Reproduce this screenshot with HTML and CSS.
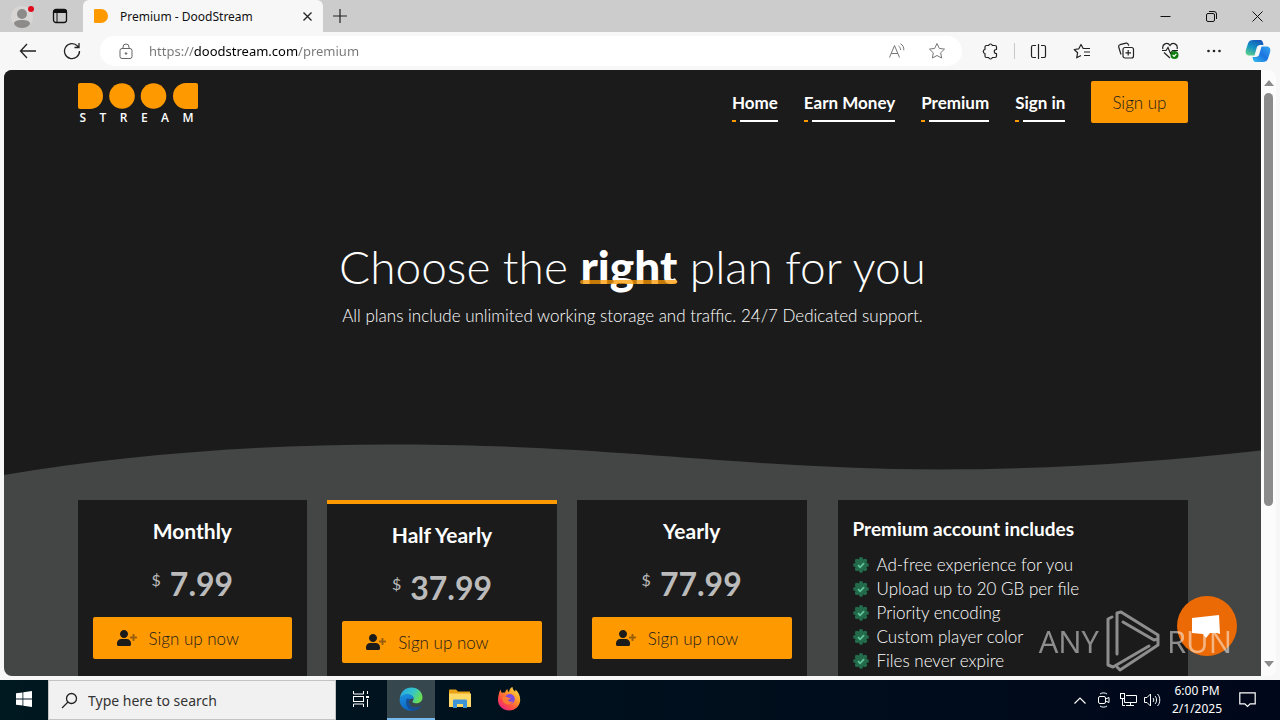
FILE: index.html
```html
<!DOCTYPE html>
<html lang="en">
<head>
  <meta charset="UTF-8" />
  <meta name="viewport" content="width=device-width, initial-scale=1.0" />
  <title>Premium - DoodStream</title>
  <link rel="stylesheet" href="styles.css">
</head>
<body>
  <!-- shared icons -->
  <svg class="sprite" aria-hidden="true">
    <symbol id="user-plus" viewBox="0 0 640 512">
      <path d="M224 256c70.7 0 128-57.3 128-128S294.7 0 224 0 96 57.3 96 128s57.3 128 128 128zm89.6 32h-179.2C60.2 288 0 348.2 0 422.4V464c0 26.5 21.5 48 48 48h352c26.5 0 48-21.5 48-48v-41.6c0-74.2-60.2-134.4-134.4-134.4z" />
      <path opacity=".45" d="M624 208h-64v-64c0-8.8-7.2-16-16-16h-32c-8.8 0-16 7.2-16 16v64h-64c-8.8 0-16 7.2-16 16v32c0 8.8 7.2 16 16 16h64v64c0 8.8 7.2 16 16 16h32c8.8 0 16-7.2 16-16v-64h64c8.8 0 16-7.2 16-16v-32c0-8.8-7.2-16-16-16z" />
    </symbol>
    <symbol id="badge" viewBox="0 0 16 16">
      <g fill="#236b4b">
        <circle cx="8" cy="8" r="6" />
        <circle cx="8" cy="2.2" r="2.1" /><circle cx="12.1" cy="3.9" r="2.1" />
        <circle cx="13.8" cy="8" r="2.1" /><circle cx="12.1" cy="12.1" r="2.1" />
        <circle cx="8" cy="13.8" r="2.1" /><circle cx="3.9" cy="12.1" r="2.1" />
        <circle cx="2.2" cy="8" r="2.1" /><circle cx="3.9" cy="3.9" r="2.1" />
      </g>
      <path d="M5 8.2l2.1 2.1 4-4.2" fill="none" stroke="#62c497" stroke-width="1.7" />
    </symbol>
  </svg>

  <div class="tabbar">
    <button class="icon-btn profile" aria-label="Profile">
      <svg width="26" height="28" viewBox="0 0 26 28">
        <circle cx="12" cy="15" r="11" fill="#d8d6d4" />
        <circle cx="12" cy="12" r="5" fill="#8d8b89" />
        <path d="M4 22c0-3 3-4 8-4s8 1 8 4c-2 3-5 4-8 4s-6-1-8-4z" fill="#8d8b89" />
        <circle cx="21" cy="7" r="3" fill="#e00b1c" />
      </svg>
    </button>
    <button class="icon-btn workspaces" aria-label="Tab actions">
      <svg width="16" height="16" viewBox="0 0 16 16" fill="none" stroke="#111">
        <rect x="1.5" y="1.5" width="13" height="13" rx="2.5" stroke-width="1.3" />
        <path d="M1.5 3.5h13" stroke-width="3" /><path d="M5 4v10" />
      </svg>
    </button>
    <div class="tab">
      <svg width="14" height="14" viewBox="0 0 14 14"><path d="M0 1a1 1 0 0 1 1-1h6a7 7 0 0 1 0 14H1a1 1 0 0 1-1-1z" fill="#ff9900" /></svg>
      <span class="tab-title">Premium - DoodStream</span>
      <button class="icon-btn close" aria-label="Close tab">
        <svg width="9" height="9" viewBox="0 0 9 9" stroke="#222" stroke-width="1.3"><path d="M.5.5l8 8M8.5.5l-8 8" /></svg>
      </button>
    </div>
    <button class="icon-btn new-tab" aria-label="New tab">
      <svg width="14" height="14" viewBox="0 0 14 14" stroke="#222" stroke-width="1.2"><path d="M7 0v14M0 7h14" /></svg>
    </button>
    <div class="window-controls">
      <button class="icon-btn" aria-label="Minimize"><svg width="11" height="11" viewBox="0 0 11 11" stroke="#111"><path d="M.5 5.5h10" /></svg></button>
      <button class="icon-btn" aria-label="Restore"><svg width="11" height="11" viewBox="0 0 11 11" fill="none" stroke="#111"><rect x=".5" y="2.5" width="8" height="8" rx="1.5" /><path d="M3 .5h5a2.5 2.5 0 0 1 2.5 2.5v5" /></svg></button>
      <button class="icon-btn" aria-label="Close"><svg width="11" height="11" viewBox="0 0 11 11" stroke="#111"><path d="M.5.5l10 10M10.5.5l-10 10" /></svg></button>
    </div>
  </div>

  <div class="toolbar">
    <button class="icon-btn nav-btn" aria-label="Back">
      <svg width="18" height="16" viewBox="0 0 18 16" fill="none" stroke="#222" stroke-width="1.3"><path d="M8 1L1.5 8 8 15M1.5 8H17" /></svg>
    </button>
    <button class="icon-btn nav-btn" aria-label="Refresh">
      <svg width="18" height="18" viewBox="0 0 18 18" fill="none" stroke="#222" stroke-width="1.3"><path d="M16.5 9A7.5 7.5 0 1 1 14.5 4L16 5.5M16 1v4.5h-4.5" /></svg>
    </button>
    <div class="address">
      <svg width="14" height="17" viewBox="0 0 14 17" fill="none" stroke="#666"><rect x="1" y="5.5" width="12" height="10" rx="2" /><path d="M4 5.5V4a3 3 0 0 1 6 0v1.5" /><circle cx="7" cy="10.5" r=".8" fill="#666" /></svg>
      <input class="url" type="text" aria-label="Address" value="https://doodstream.com/premium">
      <button class="icon-btn" aria-label="Read aloud">
        <svg width="18" height="16" viewBox="0 0 18 16" fill="none" stroke="#777"><path d="M1.5 14.5L6.5 2.5l5 12M3.2 10.5h6.6M10.5 3c1.4.8 2 2 2 4M12.5.8c2.5 1.4 3.5 3.4 3.3 6.5" /></svg>
      </button>
      <button class="icon-btn" aria-label="Add to favorites">
        <svg width="18" height="18" viewBox="0 0 18 18" fill="none" stroke="#777" stroke-linejoin="round"><path d="M9 1.5l2.3 4.9 5.2.7-3.8 3.7.9 5.2L9 13.5 4.4 16l.9-5.2L1.5 7.1l5.2-.7z" /></svg>
      </button>
    </div>
    <div class="tools">
      <button class="icon-btn" aria-label="Extensions">
        <svg width="17" height="17" viewBox="0 0 17 17" fill="none" stroke="#222" stroke-width="1.2" stroke-linejoin="round"><path d="M4.5 2.5h2.2c.3-2 3.3-2 3.6 0H13a1.5 1.5 0 0 1 1.5 1.5v2.5c-3-.3-3 4.3 0 4V13a1.5 1.5 0 0 1-1.5 1.5h-2.7c-.3 2-3.3 2-3.6 0H4.5A1.5 1.5 0 0 1 3 13v-2.5c-2.3-.3-2.3-3.7 0-4V4a1.5 1.5 0 0 1 1.5-1.5z" /></svg>
      </button>
      <span class="divider"></span>
      <button class="icon-btn" aria-label="Split screen">
        <svg width="17" height="17" viewBox="0 0 17 17" fill="none" stroke="#222" stroke-width="1.2"><path d="M6 2.5H3A1.5 1.5 0 0 0 1.5 4v9A1.5 1.5 0 0 0 3 14.5h3M11 2.5h3A1.5 1.5 0 0 1 15.5 4v9a1.5 1.5 0 0 1-1.5 1.5h-3M8.5 1v15" /></svg>
      </button>
      <button class="icon-btn" aria-label="Favorites">
        <svg width="18" height="17" viewBox="0 0 18 17" fill="none" stroke="#222" stroke-width="1.2" stroke-linejoin="round"><path d="M11 5.5h-.8L8 1.5 5.800 5.800l-4.600.7 3.400 3.300-.9 5L8 12.500M11 5.500h6M11 9h6M11 12.500h6" /></svg>
      </button>
      <button class="icon-btn" aria-label="Collections">
        <svg width="18" height="18" viewBox="0 0 18 18" fill="none" stroke="#222" stroke-width="1.2"><rect x="6" y="5.5" width="10.5" height="10.5" rx="2" /><path d="M11.2 8v5.5M8.5 10.8H14M4 12.5L1.7 5A2 2 0 0 1 3 2.7l6-1.5a2 2 0 0 1 2.3 1.3l.5 1.3" /></svg>
      </button>
      <button class="icon-btn" aria-label="Browser essentials">
        <svg width="18" height="18" viewBox="0 0 18 18" fill="none" stroke="#222" stroke-width="1.2"><path d="M2 7c-1.5-5 4.5-7.5 7-3.5C11.5-.5 17.5 2 16 7M3 10.5l6 5.5M1 8.5h4l2-3 2.5 6 2-3H17" /><circle cx="13.5" cy="13" r="4" fill="#107c10" stroke="none" /><path d="M11.7 13l1.4 1.4 2.3-2.5" stroke="#fff" /></svg>
      </button>
      <button class="icon-btn" aria-label="Settings and more">
        <svg width="16" height="4" viewBox="0 0 16 4" fill="#222"><circle cx="2.5" cy="2" r="1.3" /><circle cx="8" cy="2" r="1.3" /><circle cx="13.5" cy="2" r="1.3" /></svg>
      </button>
      <button class="icon-btn" aria-label="Copilot">
        <svg width="26" height="24" viewBox="0 0 26 24">
          <defs>
            <linearGradient id="cop1" x1=".7" y1="0" x2=".2" y2="1"><stop offset="0" stop-color="#1557b8" /><stop offset=".5" stop-color="#1592c4" /><stop offset="1" stop-color="#5ccf8a" /></linearGradient>
            <linearGradient id="cop2" x1="1" y1="0" x2="0" y2="1"><stop offset="0" stop-color="#36a8f0" /><stop offset=".5" stop-color="#1c74e0" /><stop offset="1" stop-color="#35c0ee" /></linearGradient>
          </defs>
          <path d="M8.5 1H15c2.5 0 3 2 3.5 5h-3c-2.5 0-3.500 1.500-4 3.500l-2 7H4.500c-3.500 0-4.500-2.500-3.500-6l2-6C3.700 2 5.500 1 8.500 1z" fill="url(#cop1)" />
          <path d="M17.500 23H11c-2.500 0-3-2-3.500-5h3c2.500 0 3.500-1.500 4-3.500l2-7h5c3.500 0 4.500 2.500 3.500 6l-2 6c-.7 2.500-2.500 3.500-5.500 3.500z" fill="url(#cop2)" />
        </svg>
      </button>
    </div>
  </div>

  <div class="viewport">
    <div class="site">
      <div class="hero">
        <header class="container header">
          <a class="logo" href="#" aria-label="DoodStream">
            <svg width="120" height="26" viewBox="0 0 120 26" fill="#ff9900">
              <path d="M0 2a2 2 0 0 1 2-2h10a13 13 0 0 1 0 26H2a2 2 0 0 1-2-2z" />
              <circle cx="44" cy="13" r="12.8" /><circle cx="75.5" cy="13" r="12.8" />
              <path d="M120 2a2 2 0 0 0-2-2h-10a13 13 0 0 0 0 26h10a2 2 0 0 0 2-2z" />
            </svg>
            <span class="logo-text"><span>S</span><span>T</span><span>R</span><span>E</span><span>A</span><span>M</span></span>
          </a>
          <nav class="menu">
            <a class="menu-link" href="#">Home</a>
            <a class="menu-link" href="#">Earn Money</a>
            <a class="menu-link" href="#">Premium</a>
            <a class="menu-link" href="#">Sign in</a>
            <a class="btn" href="#">Sign up</a>
          </nav>
        </header>
        <div class="container intro">
          <h1>Choose the <b>right</b> plan for you</h1>
          <p>All plans include unlimited working storage and traffic. 24/7 Dedicated support.</p>
        </div>
        <svg class="wave" viewBox="0 0 1257 40" preserveAspectRatio="none">
          <path d="M0 35C130 13 270 4 396 4.500C610 5 740 29 936 29.500C1050 29.500 1150 22 1257 10.500V40H0z" fill="#444645" />
        </svg>
      </div>

      <main class="container plans">
        <div class="plan-list">
          <section class="plan">
            <h2>Monthly</h2>
            <div class="price"><sup>$</sup> 7.99</div>
            <a class="btn btn-plan" href="#"><svg width="20" height="16"><use href="#user-plus" /></svg>Sign up now</a>
          </section>
          <section class="plan plan-popular">
            <h2>Half Yearly</h2>
            <div class="price"><sup>$</sup> 37.99</div>
            <a class="btn btn-plan" href="#"><svg width="20" height="16"><use href="#user-plus" /></svg>Sign up now</a>
          </section>
          <section class="plan">
            <h2>Yearly</h2>
            <div class="price"><sup>$</sup> 77.99</div>
            <a class="btn btn-plan" href="#"><svg width="20" height="16"><use href="#user-plus" /></svg>Sign up now</a>
          </section>
        </div>
        <aside class="features">
          <h3>Premium account includes</h3>
          <ul>
            <li><svg width="16" height="16"><use href="#badge" /></svg>Ad-free experience for you</li>
            <li><svg width="16" height="16"><use href="#badge" /></svg>Upload up to 20 GB per file</li>
            <li><svg width="16" height="16"><use href="#badge" /></svg>Priority encoding</li>
            <li><svg width="16" height="16"><use href="#badge" /></svg>Custom player color</li>
            <li><svg width="16" height="16"><use href="#badge" /></svg>Files never expire</li>
          </ul>
        </aside>
      </main>

      <button class="chat" aria-label="Open chat">
        <svg width="60" height="60" viewBox="0 0 60 60">
          <circle cx="30" cy="30" r="30" fill="#ec6a05" />
          <path d="M15 22l27-3 1 19-3-1-7 0-4 5-3-4-11-1z" fill="#fff" />
        </svg>
      </button>
    </div>
    <div class="scrollbar">
      <svg width="10" height="6" viewBox="0 0 10 6"><path d="M0 6l5-6 5 6z" fill="#8b8b8b" /></svg>
      <div class="track"><div class="thumb"></div></div>
      <svg width="10" height="6" viewBox="0 0 10 6"><path d="M0 0l5 6 5-6z" fill="#8b8b8b" /></svg>
    </div>
  </div>

  <div class="watermark">
    <span>ANY</span>
    <svg width="56" height="62" viewBox="0 0 56 62" fill="none" stroke="#fff" stroke-width="3" stroke-linejoin="round" stroke-linecap="round">
      <path d="M7 7L3 9v46l5 2 36-21" />
      <path d="M12 44V3l4-1 37 23v4l-4 1-31-18" />
      <path d="M12 57l3 3 38-25v-5" />
    </svg>
    <span>RUN</span>
  </div>

  <div class="taskbar">
    <button class="task start" aria-label="Start">
      <svg width="16" height="16" viewBox="0 0 16 16" fill="#fff"><path d="M0 2.3L6.5 1.4v6.2H0zM7.3 1.3L16 0v7.6H7.3zM0 8.4h6.5v6.2L0 13.7zM7.3 8.4H16V16l-8.7-1.3z" /></svg>
    </button>
    <label class="search">
      <svg width="17" height="17" viewBox="0 0 17 17" fill="none" stroke="#222" stroke-width="1.3"><circle cx="10.5" cy="6.5" r="5" /><path d="M7 10L1 16" /></svg>
      <input type="text" placeholder="Type here to search" aria-label="Type here to search">
    </label>
    <button class="task" aria-label="Task view">
      <svg width="16" height="16" viewBox="0 0 16 16" fill="none" stroke="#fff"><path d="M.5 0v3h10V0M.5 16v-3h10v3M14.5 0v3M14.5 8v8" /><rect x=".5" y="5.5" width="10" height="5" /><path d="M13 6h3" stroke-width="2" /></svg>
    </button>
    <button class="task active" aria-label="Microsoft Edge">
      <svg width="24" height="24" viewBox="0 0 24 24">
        <defs>
          <linearGradient id="edge1" x1="0" y1="0" x2="1" y2=".4"><stop offset="0" stop-color="#26a3e4" /><stop offset=".6" stop-color="#35c6c9" /><stop offset="1" stop-color="#66dd57" /></linearGradient>
          <linearGradient id="edge2" x1="0" y1="0" x2=".4" y2="1"><stop offset="0" stop-color="#1b92e0" /><stop offset="1" stop-color="#0b64c0" /></linearGradient>
        </defs>
        <path d="M.8 11C2 4.5 6.5.5 12.2.5c7 0 11.3 5 11.3 9.8 0 4-3 6-6.2 6-3.5 0-4.3-1.3-3.5-2.3 2.2-3-.3-6.2-4.3-6.2C5.5 7.8 2 9.5.8 11z" fill="url(#edge1)" />
        <path d="M.6 12.5C.8 9.5 4.5 6.7 8.5 7c4 .2 6.3 2.5 6 5-1.5-1-4 0-4.5 2.5-.5 3.5 2.5 7.5 8.5 6 1.5-.4 2.5-1 3.5-1.5-2.3 3.3-6 4.8-9.7 4.8C5.5 23.8.3 18.5.6 12.5z" fill="url(#edge2)" />
        <path d="M8 11.5c-2.5 4.5 0 10.5 5.5 12.2 4-.1 7-2.2 8.5-4.7-1 .5-2 1.1-3.5 1.5-6 1.5-9-2.5-8.5-6 .2-1.5 1-2.2 1.5-2.6z" fill="#174f96" />
      </svg>
    </button>
    <button class="task" aria-label="File Explorer">
      <svg width="22" height="20" viewBox="0 0 22 20"><path d="M0 1.5A1 1 0 0 1 1 .5h6l2 2h12v6H0z" fill="#e8a317" /><path d="M0 4.5h22V18H0z" fill="#ffd966" /><path d="M4 19v-7.5a1 1 0 0 1 1-1h12a1 1 0 0 1 1 1V19h-4v-4H8v4z" fill="#3d95d8" /></svg>
    </button>
    <button class="task" aria-label="Firefox">
      <svg width="24" height="24" viewBox="0 0 24 24">
        <defs><linearGradient id="fox" x1="1" y1="0" x2=".2" y2="1"><stop offset="0" stop-color="#fff04f" /><stop offset=".4" stop-color="#ff9a2a" /><stop offset=".75" stop-color="#ff4a45" /><stop offset="1" stop-color="#e3208f" /></linearGradient></defs>
        <path d="M1 13C1 9 2 5.5 3.5 2.5c.3 1.5.8 2.7 1.5 3.5 1-.5 2-.5 3-.3C8.3 4.2 9 3 10.5 2c-.2 1.5.5 2.2 1.5 3 .5-2.5 1-4 3.5-5 0 2.5 1.5 3.5 2.5 4.5.5-.5.5-1.2.4-2C21.5 5 23.3 9 23.2 13c-.2 6-5 10.500-11 10.500S1 19 1 13z" fill="url(#fox)" />
        <circle cx="12.8" cy="12" r="5" fill="#7b4be0" />
        <path d="M5.5 10c2-1 4-.5 5.500.5 1 .3 2 .2 2.500.5-.3 1-1.500 1.500-2.500 2 .5 1.800 3 2.200 5 1-1 3-5 4.500-8 2.500-2-1.500-3-4-2.500-6.500z" fill="#ff7a33" />
      </svg>
    </button>
    <div class="tray">
      <button class="icon-btn" aria-label="Show hidden icons"><svg width="12" height="7" viewBox="0 0 12 7" fill="none" stroke="#fff" stroke-width="1.2"><path d="M.5 6.5L6 1l5.5 5.5" /></svg></button>
      <button class="icon-btn" aria-label="Meet now"><svg width="12" height="16" viewBox="0 0 12 16" fill="none" stroke="#fff"><rect x=".5" y="4.5" width="7" height="7" rx="1.5" /><path d="M7.5 7l3.5-1.5v5L7.5 9M2 2c2-1.5 5-1.5 7 0M2 14c2 1.5 5 1.5 7 0" /></svg></button>
      <button class="icon-btn" aria-label="Network"><svg width="17" height="14" viewBox="0 0 17 14" fill="none" stroke="#fff"><path d="M6 2.5h10.5v7H4.5V6M10.5 9.5v3M6 12.5h8M2.5 6v6.5H5" /><rect x=".5" y=".5" width="4" height="5" /></svg></button>
      <button class="icon-btn" aria-label="Volume"><svg width="17" height="14" viewBox="0 0 17 14" fill="none" stroke="#fff"><path d="M.5 4.5h2.5l3.5-3.5v12L3 9.5H.5zM9 5c1 1 1 3 0 4M11 3c2 2 2 6 0 8M13.5 1c3 3 3 9 0 12" /></svg></button>
      <div class="clock"><span>6:00 PM</span><span>2/1/2025</span></div>
      <button class="icon-btn notify" aria-label="Notifications"><svg width="17" height="16" viewBox="0 0 17 16" fill="none" stroke="#fff" stroke-width="1.2"><path d="M.8.8h15.400v11h-5L8.500 14.500 5.800 11.800h-5z" /></svg></button>
    </div>
  </div>
</body>
</html>
```
FILE: styles.css
```css
* {
  margin: 0;
  padding: 0;
  box-sizing: border-box;
}

body {
  height: 100vh;
  display: flex;
  flex-direction: column;
  overflow: hidden;
  background: #f7f7f7;
  font-family: Lato, "Open Sans", sans-serif;
}

a {
  color: inherit;
  text-decoration: none;
}

svg {
  display: block;
  flex-shrink: 0;
}

.sprite {
  position: absolute;
  width: 0;
  height: 0;
}

.icon-btn {
  display: flex;
  align-items: center;
  justify-content: center;
  background: none;
  border: none;
}

/* tab strip */
.tabbar {
  display: flex;
  align-items: center;
  height: 32px;
  background: #cccccc;
  font-family: "Noto Sans", sans-serif;
}

.profile {
  width: 46px;
}

.workspaces {
  width: 28px;
}

.tab {
  display: flex;
  align-items: center;
  gap: 12px;
  width: 240px;
  height: 32px;
  margin-left: 9px;
  padding: 0 11px;
  background: #f7f7f7;
  border-radius: 6px 6px 0 0;
}

.tab-title {
  flex: 1;
  font-size: 12px;
  white-space: nowrap;
  color: #111;
}

.new-tab {
  width: 34px;
}

.window-controls {
  display: flex;
  margin-left: auto;
}

.window-controls .icon-btn {
  width: 46px;
  height: 32px;
}

/* toolbar */
.toolbar {
  display: flex;
  align-items: center;
  height: 38px;
  padding-left: 6px;
}

.nav-btn {
  width: 44px;
  height: 30px;
}

.address {
  flex: 1;
  display: flex;
  align-items: center;
  height: 30px;
  margin-left: 6px;
  padding: 0 16px 0 19px;
  gap: 22px;
  background: #fff;
  border-radius: 15px;
}

.url {
  flex: 1;
  min-width: 0;
  margin-left: -6px;
  height: 20px;
  border: none;
  outline: none;
  font-family: "Noto Sans", sans-serif;
  font-size: 13px;
  /* the domain is darker than the rest of the address */
  background: linear-gradient(90deg, #767676 45px, #000 45px, #000 149px, #767676 149px);
  -webkit-background-clip: text;
  background-clip: text;
  -webkit-text-fill-color: transparent;
}

.tools {
  display: flex;
  align-items: center;
  margin-left: 8px;
}

.tools .icon-btn {
  width: 44px;
  height: 30px;
}

.tools .icon-btn:first-child {
  width: 40px;
}

.divider {
  width: 1px;
  height: 16px;
  margin: 0 1px 0 4px;
  background: #c8c8c8;
}

/* page area */
.viewport {
  flex: 1;
  min-height: 0;
  display: flex;
  margin: 0 4px 4px;
  border-radius: 8px;
  overflow: hidden;
}

.site {
  position: relative;
  flex: 1;
  min-width: 0;
  display: flex;
  flex-direction: column;
  overflow: hidden;
  background: #444645;
  color: #fff;
}

.container {
  width: 100%;
  max-width: 1110px;
  margin: 0 auto;
}

.hero {
  background: #1b1b1b;
}

.header {
  display: flex;
  align-items: center;
  justify-content: space-between;
  padding: 11px 0;
}

.logo {
  padding-top: 2px;
}

.logo-text {
  display: flex;
  justify-content: space-between;
  padding: 3px 4px 0 2px;
  font-family: "Open Sans", sans-serif;
  font-size: 12px;
  font-weight: 600;
  line-height: 11px;
}

.menu {
  display: flex;
  align-items: center;
  gap: 26px;
  font-size: 17px;
}

.menu-link {
  padding: 10px 0 9px;
  line-height: 20px;
  font-weight: 700;
  background: linear-gradient(90deg, #ff9900 4px, #1b1b1b 4px, #1b1b1b 8px, #fff 8px) bottom / 100% 2px no-repeat;
}

.btn {
  display: flex;
  align-items: center;
  height: 42px;
  padding: 0 21px;
  background: #ff9900;
  border-radius: 2px;
  color: #1b1b1b;
  font-size: 17px;
  font-weight: 300;
}

.intro {
  padding: 101px 0 111px;
  text-align: center;
}

h1 {
  font-size: 46px;
  font-weight: 300;
  line-height: 64px;
}

h1 b {
  position: relative;
  font-weight: 900;
}

/* marker line drawn over the letters */
h1 b::after {
  content: "";
  position: absolute;
  left: 0;
  right: 0;
  bottom: 10px;
  height: 4px;
  border-radius: 2px;
  background: #ff9900;
  opacity: 0.75;
}

.intro p {
  margin-top: 4px;
  font-size: 17px;
  font-weight: 300;
  line-height: 26px;
}

.wave {
  width: 100%;
  height: 40px;
}

/* plans */
.plans {
  flex: 1;
  display: grid;
  grid-template-columns: 1fr 350px;
  gap: 31px;
  padding-top: 20px;
}

.plan-list {
  display: grid;
  grid-template-columns: repeat(3, 1fr);
  gap: 20px;
}

.plan,
.features {
  padding: 15px;
  background: #1b1b1b;
}

.plan-popular {
  border-top: 4px solid #ff9900;
}

.plan h2 {
  font-size: 21px;
  font-weight: 700;
  line-height: 32px;
  text-align: center;
}

.price {
  display: flex;
  justify-content: center;
  gap: 9px;
  margin: 12px 0 8px;
  color: #bbb;
  font-size: 32px;
  font-weight: 700;
  line-height: 50px;
}

.price sup {
  font-size: 16px;
  font-weight: 400;
  line-height: 42px;
}

.btn-plan {
  gap: 12px;
  padding: 0 24px;
}

.btn-plan svg {
  fill: #1b1b1b;
}

.features h3 {
  margin-bottom: 10px;
  font-size: 19px;
  font-weight: 700;
  line-height: 28px;
}

.features ul {
  list-style: none;
}

.features li {
  display: flex;
  align-items: center;
  gap: 8px;
  font-size: 17px;
  font-weight: 300;
  line-height: 24px;
}

.chat {
  position: absolute;
  right: 24px;
  bottom: 20px;
  background: none;
  border: none;
}

/* scrollbar */
.scrollbar {
  width: 15px;
  display: flex;
  flex-direction: column;
  align-items: center;
  gap: 10px;
  padding: 10px 0 9px;
  background: #fcfcfc;
}

.track {
  flex: 1;
  margin-top: -3px;
}

.thumb {
  width: 9px;
  height: 74%;
  border-radius: 5px;
  background: #8b8b8b;
}

/* overlay in the corner of the desktop */
.watermark {
  position: absolute;
  right: 48px;
  bottom: 48px;
  display: flex;
  align-items: center;
  gap: 6px;
  opacity: 0.5;
  color: #fff;
  font-family: "Open Sans", sans-serif;
  font-size: 31px;
  pointer-events: none;
}

/* taskbar */
.taskbar {
  display: flex;
  height: 40px;
  background: linear-gradient(90deg, #001820, #00071a);
}

.task {
  display: flex;
  align-items: center;
  justify-content: center;
  width: 49px;
  border: none;
  border-bottom: 2px solid transparent;
  background: none;
}

.task.start {
  width: 48px;
}

.task.active {
  width: 48px;
  margin-left: 2px;
  background: #36474e;
  border-bottom-color: #76b9ed;
}

.search {
  display: flex;
  align-items: center;
  gap: 10px;
  width: 288px;
  padding: 0 12px;
  background: #f1f1f1;
  border: 1px solid #c4c4c4;
}

.search input {
  flex: 1;
  min-width: 0;
  border: none;
  outline: none;
  background: none;
  font-family: "Noto Sans", sans-serif;
  font-size: 14px;
}

.search input::placeholder {
  color: #333;
}

.tray {
  display: flex;
  align-items: center;
  margin-left: auto;
  padding-right: 16px;
}

.tray .icon-btn {
  width: 24px;
  height: 40px;
}

.clock {
  display: flex;
  flex-direction: column;
  align-items: center;
  width: 66px;
  color: #fff;
  font-family: "Noto Sans", sans-serif;
  font-size: 12px;
  line-height: 18px;
}

.tray .notify {
  width: 34px;
}
```
